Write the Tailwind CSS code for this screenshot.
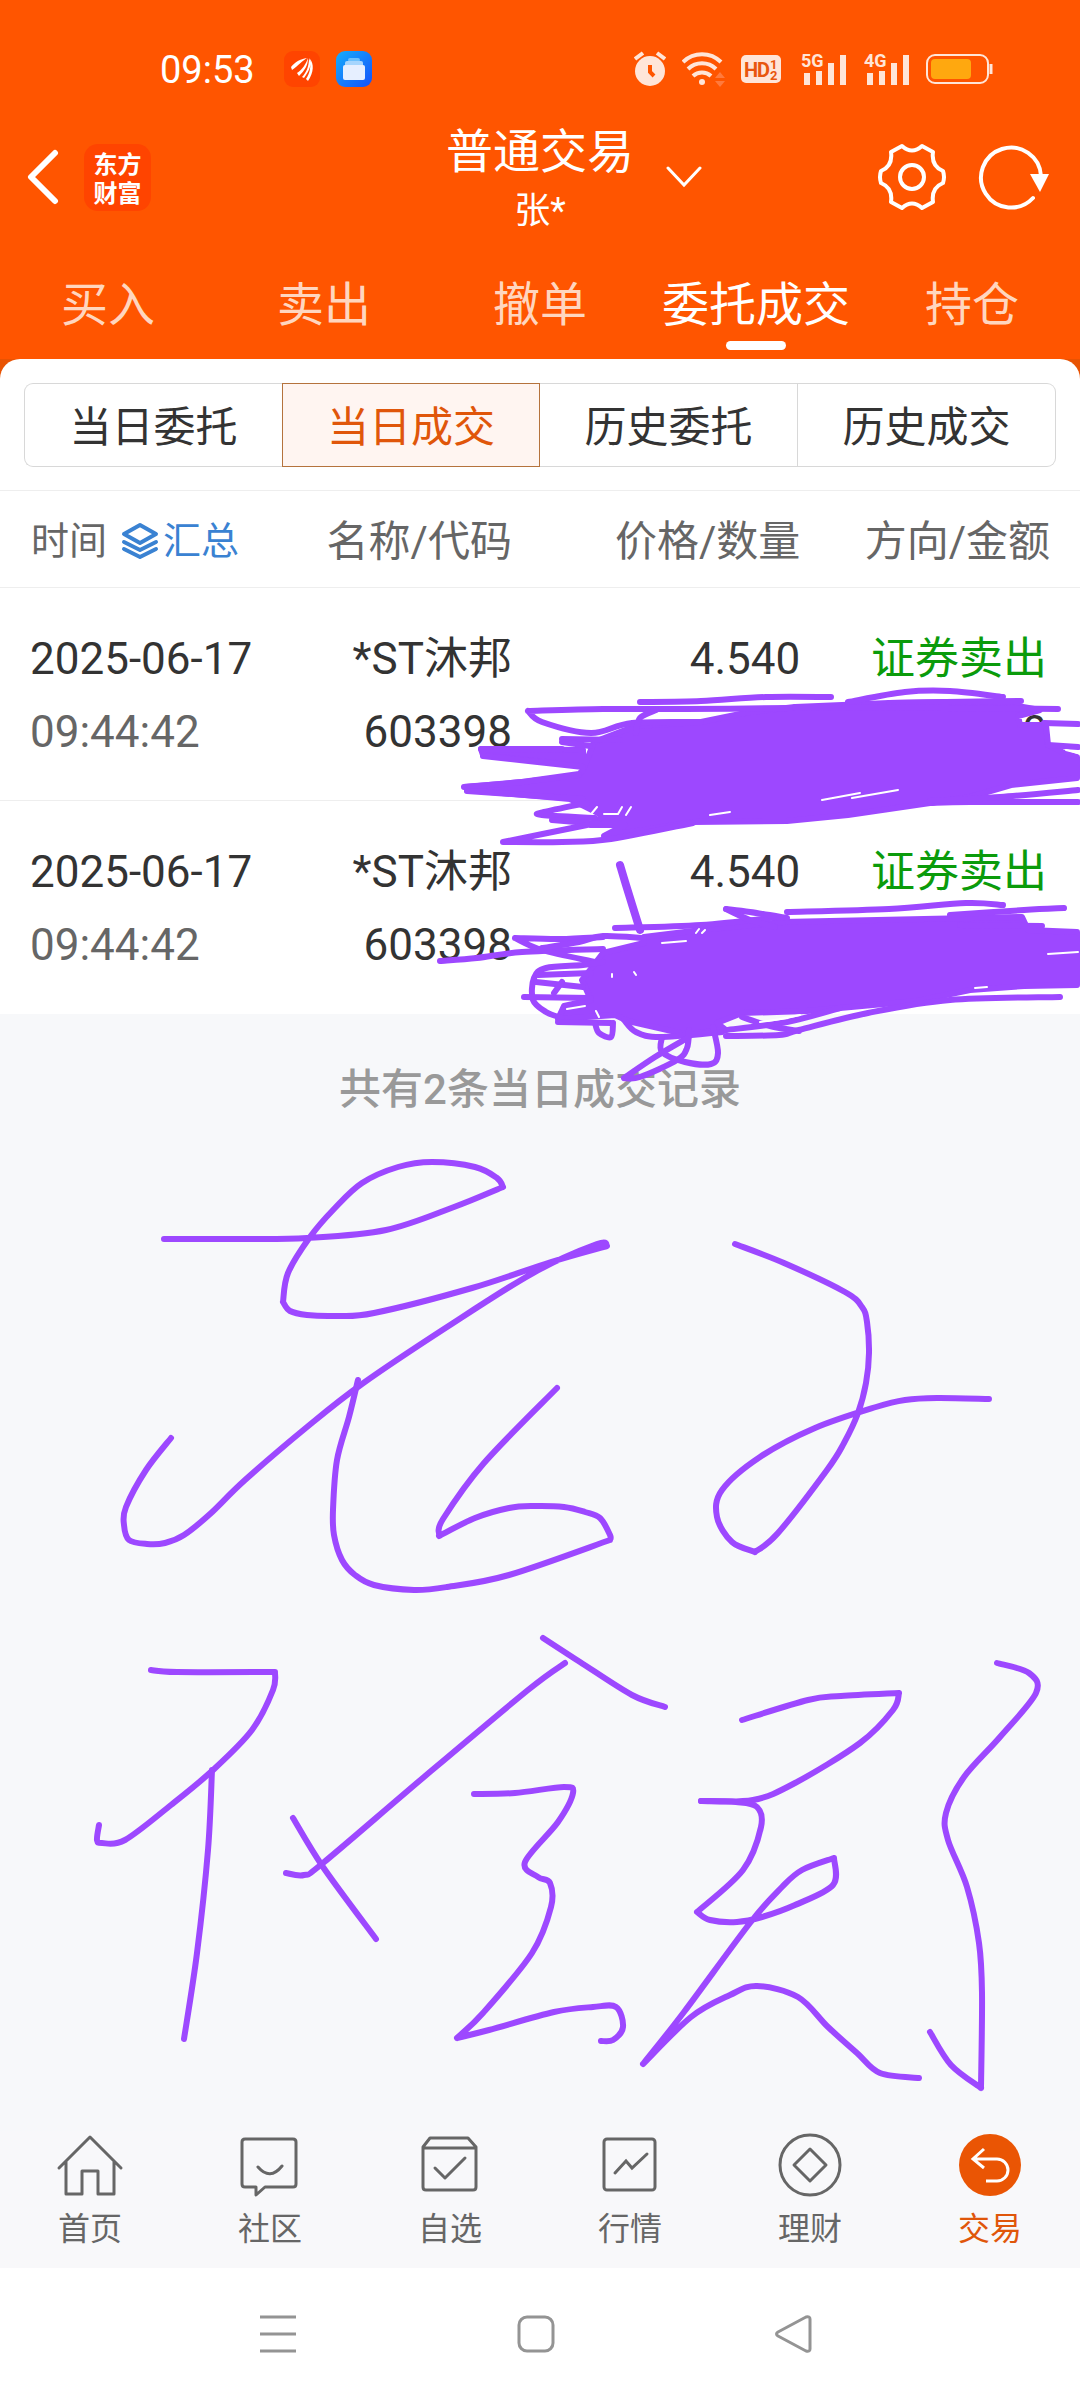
<!DOCTYPE html>
<html lang="zh-CN">
<head>
  <meta charset="UTF-8">
  <meta name="viewport" content="width=device-width, initial-scale=1">
  <title>普通交易</title>
  <script src="https://cdn.jsdelivr.net/npm/@tailwindcss/browser@4"></script>
</head>
<body class="relative flex min-h-screen flex-col bg-[#f7f8fa] font-['Roboto','Noto_Sans_CJK_SC',sans-serif] text-[#333]">

  <header class="bg-[#ff5500] text-white">
    <!-- status bar -->
    <div class="flex h-[110px] items-center justify-between pt-7 pr-[86px] pl-[160px]">
      <div class="flex items-center">
        <span class="pt-0.5 text-[38px] leading-none">09:53</span>
        <svg class="ml-[29px] size-9" viewBox="0 0 36 36">
          <rect width="36" height="36" rx="9" fill="#ff4400"/>
          <path fill="#fff" d="M7 16c4-5 9-8 16-9-5 3-8 7-15 12zM13 22c5-3 9-9 11-15 0 7-3 12-9 18zM18 26c4-4 7-10 7-19 3 6 1 12-5 20zM22 28c4-6 5-12 4-20 4 5 4 13-2 22z"/>
        </svg>
        <svg class="ml-4 size-9" viewBox="0 0 36 36">
          <defs><linearGradient id="app" x1="0" y1="0" x2="1" y2="1"><stop offset="0" stop-color="#16adfb"/><stop offset="1" stop-color="#1450fb"/></linearGradient></defs>
          <rect width="36" height="36" rx="9" fill="url(#app)"/>
          <rect x="12" y="7" width="12" height="4" rx="2" fill="#6cc0fc"/>
          <rect x="9" y="10" width="18" height="6" rx="2" fill="#a6d5fd"/>
          <rect x="7" y="14" width="22" height="15" rx="2" fill="#e6efff"/>
        </svg>
      </div>
      <div class="flex items-center text-[#ffe5d8]">
        <svg class="h-9 w-8" viewBox="0 0 32 36" fill="currentColor">
          <circle cx="16" cy="20" r="15"/>
          <path d="M1 8l8-6M31 8l-8-6" stroke="currentColor" stroke-width="4"/>
          <path d="M16 14v7l4 4" fill="none" stroke="#ff5500" stroke-width="4"/>
        </svg>
        <svg class="ml-4 h-9 w-11" viewBox="0 0 44 36" fill="none" stroke="currentColor" stroke-width="4">
          <path d="M1 11a27 27 0 0 1 38 0M6 18a20 20 0 0 1 28 0M11 25a13 13 0 0 1 18 0"/>
          <circle cx="20" cy="31" r="3" fill="currentColor" stroke="none"/>
          <path fill="#ff7a3d" stroke="none" d="M33 27l5-6 5 6zM33 30l5 6 5-6z"/>
        </svg>
        <svg class="ml-[15px] h-7 w-10" viewBox="0 0 40 28">
          <rect width="40" height="28" rx="5" fill="currentColor"/>
          <g fill="#e8560f" font-family="Roboto" font-weight="700">
            <text x="3" y="22" font-size="20">H</text><text x="16" y="22" font-size="20">D</text>
            <text x="29" y="14" font-size="13">1</text><text x="29" y="25" font-size="13">2</text>
          </g>
        </svg>
        <svg class="ml-5 h-9 w-[46px]" viewBox="0 0 46 36" fill="currentColor">
          <text x="0" y="16" font-family="Roboto" font-weight="700" font-size="18">5G</text>
          <path d="M3 22h6v12H3zM15 20h6v14h-6zM27 12h6v22h-6zM39 4h6v30h-6z"/>
        </svg>
        <svg class="ml-[17px] h-9 w-[46px]" viewBox="0 0 46 36" fill="currentColor">
          <text x="0" y="16" font-family="Roboto" font-weight="700" font-size="18">4G</text>
          <path d="M3 22h6v12H3zM15 20h6v14h-6zM27 12h6v22h-6zM39 4h6v30h-6z"/>
        </svg>
        <svg class="ml-4 h-[30px] w-[68px]" viewBox="0 0 68 30">
          <rect x="1" y="1" width="61" height="28" rx="8" fill="none" stroke="currentColor" stroke-width="2"/>
          <rect x="5" y="5" width="40" height="20" rx="4" fill="#ffa80f"/>
          <path d="M65 10v10" stroke="currentColor" stroke-width="3"/>
        </svg>
      </div>
    </div>

    <!-- title bar -->
    <div class="grid h-[134px] grid-cols-[1fr_auto_1fr] items-center">
      <div class="flex items-center pl-[27px]">
        <button type="button" aria-label="返回">
          <svg class="h-14 w-8" viewBox="0 0 32 56" fill="none" stroke="#fff" stroke-width="6" stroke-linecap="round" stroke-linejoin="round"><path d="M28 4L4 28l24 24"/></svg>
        </button>
        <div class="ml-[25px] size-[67px] rounded-[14px] bg-[#ff4400] pt-1 text-center font-['Noto_Sans_CJK_SC',sans-serif] text-[24px] leading-[29px] font-bold">东方<br>财富</div>
      </div>
      <div class="pt-1 text-center">
        <h1 class="text-[47px] leading-[64px]">普通交易</h1>
        <p class="text-[36px] leading-[54px]">张*</p>
      </div>
      <div class="flex items-center pr-[30px] pl-8">
        <button type="button" aria-label="切换账户">
          <svg class="h-6 w-9" viewBox="0 0 36 24" fill="none" stroke="#fff" stroke-width="3" stroke-linecap="round"><path d="M2 3l16 17L34 3"/></svg>
        </button>
        <button type="button" aria-label="设置" class="ml-auto">
          <svg class="size-[68px]" viewBox="0 0 68 68" fill="none" stroke="#fff" stroke-width="4" stroke-linejoin="round">
            <path d="M24 3Q34 12 44 3L55 9Q53 23 65 28Q67 34 65 40Q53 45 55 59L44 65Q34 56 24 65L13 59Q15 45 3 40Q1 34 3 28Q15 23 13 9Z"/>
            <circle cx="34" cy="34" r="12"/>
          </svg>
        </button>
        <button type="button" aria-label="刷新" class="ml-8">
          <svg class="h-[68px] w-[72px]" viewBox="0 0 72 68">
            <path d="M55 55A30 30 0 1 1 63 33" fill="none" stroke="#fff" stroke-width="4" stroke-linecap="round"/>
            <path d="M52 31h19L62 49z" fill="#fff"/>
          </svg>
        </button>
      </div>
    </div>

    <nav class="grid h-[115px] grid-cols-5 pt-[29px] text-[47px] leading-[64px] text-[#ffd6bf]">
      <button type="button" class="self-start">买入</button>
      <button type="button" class="self-start">卖出</button>
      <button type="button" class="self-start">撤单</button>
      <button type="button" class="flex flex-col items-center text-white">委托成交<span class="mt-1 h-[9px] w-[60px] rounded-full bg-white"></span></button>
      <button type="button" class="self-start">持仓</button>
    </nav>
  </header>

  <main class="flex-1">
    <div class="bg-[#e85303]">
      <section class="rounded-t-[20px] bg-white">
        <div class="px-6 pt-6">
          <div class="grid h-[84px] grid-cols-4 text-[42px]">
            <button type="button" class="rounded-l-[9px] border border-r-0 border-[#d8d8d8] pt-1">当日委托</button>
            <button type="button" class="border border-[#b5733d] bg-[#fff5f1] pt-1 text-[#e0560a]">当日成交</button>
            <button type="button" class="border border-l-0 border-[#d8d8d8] pt-1">历史委托</button>
            <button type="button" class="rounded-r-[9px] border border-l-0 border-[#d8d8d8] pt-1">历史成交</button>
          </div>
        </div>

        <table class="mt-[23px] w-full table-fixed text-right text-[44px] leading-[73px]">
          <thead>
            <tr class="h-[97px] border-y border-y-[#eee] text-[42px] text-[#666]">
              <th class="w-[28%] pt-1 pl-[31px] text-left font-normal">
                <div class="flex items-center text-[38px]">
                  时间
                  <button type="button" class="ml-3.5 flex items-center text-[#3a82d2]">
                    <svg class="mr-1 size-[38px]" viewBox="0 0 38 38" fill="none" stroke="currentColor" stroke-width="4" stroke-linejoin="round" stroke-linecap="round">
                      <path d="M19 3l16 9-16 9L3 12zM3 20l16 8 16-8M3 27l16 8 16-8"/>
                    </svg>汇总
                  </button>
                </div>
              </th>
              <th class="w-[19.4%] pt-1 font-normal whitespace-nowrap">名称/代码</th>
              <th class="w-[26.7%] pt-1 font-normal">价格/数量</th>
              <th class="pt-1 pr-[30px] font-normal">方向/金额</th>
            </tr>
          </thead>
          <tbody>
            <tr class="h-[213px] border-b border-[#eee]">
              <td class="pt-1 pl-[30px] text-left">2025-06-17<br><span class="text-[#666]">09:44:42</span></td>
              <td class="pt-1 whitespace-nowrap">*ST沐邦<br>603398</td>
              <td class="pt-1">4.540<br>&nbsp;</td>
              <td class="pt-1 pr-[33px]"><span class="text-[#0b9b0b]">证券卖出</span><br>0</td>
            </tr>
            <tr class="h-[213px]">
              <td class="pt-1 pl-[30px] text-left">2025-06-17<br><span class="text-[#666]">09:44:42</span></td>
              <td class="pt-1 whitespace-nowrap">*ST沐邦<br>603398</td>
              <td class="pt-1">4.540<br>&nbsp;</td>
              <td class="pt-1 pr-[33px]"><span class="text-[#0b9b0b]">证券卖出</span><br>0</td>
            </tr>
          </tbody>
        </table>
      </section>
    </div>
    <p class="pt-[44px] text-center text-[42px] leading-[64px] font-medium text-[#999]">共有2条当日成交记录</p>
  </main>

  <nav class="grid grid-cols-6 bg-[#f8f8fa] pb-[15px] text-center text-[32px] leading-[48px] text-[#666]">
    <a href="#" class="flex flex-col items-center">
      <svg class="size-[68px]" viewBox="0 0 68 68" fill="none" stroke="currentColor" stroke-width="3" stroke-linecap="round" stroke-linejoin="round"><path d="M3 37L34 6l31 31M10 31v32h16V40h16v23h16V31"/></svg>
      <span class="mt-1.5">首页</span>
    </a>
    <a href="#" class="flex flex-col items-center">
      <svg class="size-[68px]" viewBox="0 0 68 68" fill="none" stroke="currentColor" stroke-width="3" stroke-linecap="round" stroke-linejoin="round"><path d="M9 8h48q3 0 3 3v42q0 3-3 3H29l-9 8v-8H9q-3 0-3-3V11q0-3 3-3zM22 36q12 14 24-1"/></svg>
      <span class="mt-1.5">社区</span>
    </a>
    <a href="#" class="flex flex-col items-center">
      <svg class="size-[68px]" viewBox="0 0 68 68" fill="none" stroke="currentColor" stroke-width="3" stroke-linecap="round" stroke-linejoin="round"><path d="M7 16l7-9h38l8 9v40q0 3-3 3H10q-3 0-3-3zM7 17h53M19 37l10 10 20-20"/></svg>
      <span class="mt-1.5">自选</span>
    </a>
    <a href="#" class="flex flex-col items-center">
      <svg class="size-[68px]" viewBox="0 0 68 68" fill="none" stroke="currentColor" stroke-width="3" stroke-linecap="round"><rect x="8" y="8" width="51" height="51" rx="3"/><path d="M19 42l11-12 6 7 15-14"/></svg>
      <span class="mt-1.5">行情</span>
    </a>
    <a href="#" class="flex flex-col items-center">
      <svg class="size-[68px]" viewBox="0 0 68 68" fill="none" stroke="currentColor" stroke-width="3" stroke-linejoin="round"><circle cx="34" cy="34" r="30"/><path d="M34 18l16 16-16 16-16-16z"/></svg>
      <span class="mt-1.5">理财</span>
    </a>
    <a href="#" class="flex flex-col items-center text-[#e0560a]">
      <svg class="size-[68px]" viewBox="0 0 68 68"><circle cx="34" cy="34" r="31" fill="#ea5504"/><path d="M28 18L17 28l11 9M18 28h23a11 11 0 0 1 0 22H30" fill="none" stroke="#fff" stroke-width="3"/></svg>
      <span class="mt-1.5">交易</span>
    </a>
  </nav>

  <!-- system keys -->
  <footer class="flex h-[132px] items-center justify-between bg-white pr-[268px] pl-[259px]">
    <button type="button" aria-label="最近任务"><svg class="size-[38px]" viewBox="0 0 38 38" stroke="#949494" stroke-width="3"><path d="M1 2h36M1 19h36M1 36h36"/></svg></button>
    <button type="button" aria-label="主屏幕"><svg class="size-[38px]" viewBox="0 0 38 38" fill="none" stroke="#949494" stroke-width="3"><rect x="2" y="2" width="34" height="34" rx="8"/></svg></button>
    <button type="button" aria-label="返回上一级"><svg class="size-[38px]" viewBox="0 0 38 38" fill="none" stroke="#949494" stroke-width="3" stroke-linejoin="round"><path d="M32 2q4-1 4 2v30q0 3-4 2L4 21q-3-2 0-4z"/></svg></button>
  </footer>

  <!-- pen drawing over the page -->
  <svg class="pointer-events-none absolute top-0 left-0 w-full" viewBox="0 0 1080 2400" fill="none" stroke="#9d48ff" stroke-width="6" stroke-linecap="round" stroke-linejoin="round">
    <g fill="#9d48ff">
      <path d="M583 770L594 742 620 732 636 726 701 722 750 712 795 707 889 703 946 702 1023 707 1040 710 1018 716 1020 725 1046 725 1048 745 1062 752 1077 757V778L1011 785 970 797 930 803 848 815 787 821 693 822 644 830 604 836 625 825 590 825 604 816 570 799 467 790V787L522 782 579 774zM481 749L583 750V766L483 755z"/>
      <path d="M644 937L701 930 783 922 1022 917 1028 930 1077 932V985L1024 986 970 990 917 1001 807 1011 742 1013 717 1023 726 1030 685 1034 628 1021 615 1015 558 1019 564 1006 591 1000 582 980 590 970 603 953 644 943z"/>
    </g>
    <g id="ink"></g>
    <g stroke="#fff" stroke-width="2">
      <path d="M822 800l38-7M852 798l46-8M710 815l20-3M1066 750l12 3M592 813l5-6M604 814h14l4-7M626 815l5-8"/>
      <path d="M699 929l-3 4M705 930l-3 3M662 943l24-2M1048 954l30-2M975 988l12-1M780 1019l20-4M760 1022l28-4M612 974v3M634 972l2 3M567 1009l18-3M596 1011l3 6"/>
    </g>
  </svg>

  <script>
    // every stroke is a list of x,y points; "|" marks a sharp turn
    const strokes = [
      // upper scribble
      '640,702 701,701 766,697 831,697',
      '791,708 685,709 603,709 528,711|528,711 542,722 591,733 632,723 701,722',
      '656,710 640,718 636,733',
      '848,702 905,692 950,691 1003,697',
      '889,703 946,702 1021,701', '795,707 946,708 1058,709',
      '562,739 620,740', '562,742 590,746',
      '481,749 562,749', '483,756 583,767',
      '464,787 522,782 579,775', '467,791 583,799',
      '587,803 544,812 542,815 595,818',
      '552,820 600,824',
      '587,825 503,842|503,842 562,842 611,839 693,823',
      '930,803 970,802 1078,802', '930,801 1000,797 1078,790',
      '1044,723 1078,724', '1048,745 1078,747',
      // lower scribble
      '440,961 477,958 522,952 603,949',
      '603,937 560,939 515,938|515,938 542,950 595,962',
      '542,948 579,942 603,936 644,938',
      '615,928 701,925 779,917',
      '726,909 750,912 787,918', '726,909 750,920 775,927',
      '787,912 889,909 966,903 1003,905',
      '1064,908 1024,910 950,915', '1042,926 960,925',
      '603,962 583,965 546,968 534,978 533,1000 546,1012 562,1018',
      '538,975 591,973', '536,982 583,987', '524,997 591,998', '562,982 554,993',
      '558,1022 611,1023',
      '595,1023 599,1033 611,1037 613,1023',
      '624,1020 636,1032 660,1037 722,1032',
      '689,1037 655,1057 624,1078|624,1078 640,1077 677,1060 687,1048 689,1030',
      '662,1037 662,1052 685,1062 711,1064 718,1053 713,1027',
      '726,1036 779,1035 799,1030 868,1013 950,1000 1060,997',
      '742,1017 770,1026 799,1031', '726,1030 787,1022 840,1008',
      // handwriting, first line
      '164,1239 240,1239 307,1238 386,1230 454,1207 503,1187|503,1187 497,1178 475,1167 432,1162 398,1167 362,1183 334,1209 310,1237 288,1273 283,1302|283,1302 290,1311 307,1315 335,1316 374,1313 472,1288 551,1262 607,1246|607,1246 597,1244 533,1273 447,1327 362,1384 307,1427 245,1480 210,1514 184,1535 165,1543 147,1544 129,1540 124,1525 126,1507 146,1470 171,1438',
      '358,1380 349,1417 337,1460 333,1510 334,1535 342,1560 355,1575 374,1585 414,1590 447,1587 509,1575 610,1540|610,1540 610,1535 600,1518 585,1512 564,1507 534,1506 509,1508 475,1518 439,1536|439,1534 443,1519 484,1463 557,1388',
      '735,1244 784,1263 845,1292 862,1307 867,1322 869,1353 866,1383 858,1413 844,1443 827,1470 778,1533 755,1552|755,1552 732,1542 717,1517 722,1490 760,1457 815,1428 876,1407 905,1400 937,1398 989,1399',
      // second line
      '151,1670 177,1672 275,1672|275,1672 273,1690 252,1730 213,1770 171,1805 125,1840 102,1843 97,1840 99,1825',
      '212,1770 208,1850 197,1953 184,2039',
      '565,1663 528,1690 424,1777 323,1863 304,1875 286,1873',
      '293,1818 323,1867 376,1939',
      '543,1638 580,1662 632,1695 665,1707',
      '474,1794 515,1793 564,1787 573,1793 558,1822 525,1862 538,1877 550,1883 551,1907 532,1953 483,2013 457,2038|457,2038 489,2030 554,2012 593,2007 616,2007 623,2027 613,2040 601,2041',
      '742,1720 808,1700 841,1696 899,1693|899,1693 893,1710 860,1743 795,1783 753,1800 701,1801',
      '701,1801 736,1802 757,1807 761,1827 743,1870 697,1912|697,1912 710,1920 737,1922 762,1917 795,1905 833,1885 834,1858|834,1858 802,1870 782,1887 750,1923 684,2012 643,2064|643,2064 691,2017 730,1995 757,1986 798,1997 828,2027 857,2053 880,2073 919,2078',
      '997,1663 1029,1673 1036,1693 1000,1737 964,1777 946,1813 948,1840 967,1887 979,1943 982,1993 981,2088|981,2088 951,2065 930,2032'
    ];

    // smooth curve through the points
    function curve(text) {
      const p = text.split(' ').map((s) => s.split(',').map(Number));
      let d = 'M' + p[0];
      for (let i = 0; i < p.length - 1; i++) {
        const a = p[i - 1] || p[i], b = p[i], c = p[i + 1], e = p[i + 2] || c;
        d += 'C' + [b[0] + (c[0] - a[0]) / 6, b[1] + (c[1] - a[1]) / 6, c[0] - (e[0] - b[0]) / 6, c[1] - (e[1] - b[1]) / 6, c[0], c[1]].join(' ');
      }
      return d;
    }

    const ink = document.getElementById('ink');
    function draw(d, width) {
      const path = document.createElementNS('http://www.w3.org/2000/svg', 'path');
      path.setAttribute('d', d);
      if (width) path.setAttribute('stroke-width', width);
      ink.appendChild(path);
    }
    strokes.forEach((s) => draw(s.split('|').map(curve).join('')));
    draw(curve('620,865 626,885 640,930'), 8);
  </script>
</body>
</html>
